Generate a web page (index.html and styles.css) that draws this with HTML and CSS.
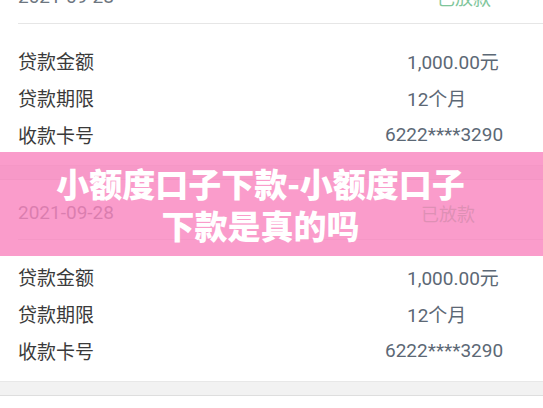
FILE: index.html
```html
<!DOCTYPE html>
<html lang="zh-CN">
<head>
<meta charset="utf-8">
<title>小额度口子下款</title>
<link rel="stylesheet" href="styles.css">
</head>
<body>
<div class="page">
  <div class="list">
    <section class="card">
      <div class="card__head">
        <span class="card__date">2021-09-28</span>
        <span class="card__status">已放款</span>
      </div>
      <div class="card__body">
        <div class="row"><span class="row__label">贷款金额</span><span class="row__val">1,000.00元</span></div>
        <div class="row"><span class="row__label">贷款期限</span><span class="row__val">12个月</span></div>
        <div class="row"><span class="row__label">收款卡号</span><span class="row__val row__val--wide">6222****3290</span></div>
      </div>
    </section>
    <div class="gap"></div>
    <section class="card">
      <div class="card__head">
        <span class="card__date">2021-09-28</span>
        <span class="card__status card__status--alt">已放款</span>
      </div>
      <div class="card__body">
        <div class="row"><span class="row__label">贷款金额</span><span class="row__val">1,000.00元</span></div>
        <div class="row"><span class="row__label">贷款期限</span><span class="row__val">12个月</span></div>
        <div class="row"><span class="row__label">收款卡号</span><span class="row__val row__val--wide">6222****3290</span></div>
      </div>
    </section>
    <div class="gap"></div>
    <section class="card card--empty"></section>
  </div>
  <div class="banner">
    <h1 class="banner__title">小额度口子下款-小额度口子下款是真的吗</h1>
  </div>
</div>
</body>
</html>
```

FILE: styles.css
```css
* { box-sizing: border-box; }
html, body {
  margin: 0;
  padding: 0;
  background: #ffffff;
  overflow: hidden;
}
body {
  width: 543px;
  height: 408px;
  font-family: Roboto, "Noto Sans CJK SC", sans-serif;
}
.page {
  position: relative;
  width: 543px;
  height: 408px;
  overflow: hidden;
}
.list {
  margin-top: -36px;
}
.card {
  background: #ffffff;
}
.card__head {
  height: 60px;
  margin-left: 18px;
  padding: 6px 60px 0 0;
  display: flex;
  align-items: center;
  justify-content: space-between;
  border-bottom: 1px solid #e6e6e6;
}
.card__date {
  font-size: 19px;
  color: #6d7680;
}
.card__status {
  font-family: "Noto Sans CJK SC", sans-serif;
  font-size: 18px;
  color: #7fc69b;
  margin-right: -8px;
}
.card__status--alt {
  margin-right: 8px;
}
.card__body {
  padding: 18px 0 12px 18px;
}
.row {
  height: 37px;
  display: grid;
  grid-template-columns: 389px 1fr;
  align-items: center;
}
.row__label {
  font-family: "Noto Sans CJK SC", sans-serif;
  font-size: 19px;
  color: #3a3a3a;
}
.row__val {
  font-family: Roboto, "Noto Sans CJK SC", sans-serif;
  font-size: 19px;
  color: #5c6875;
}
.row__val--wide {
  margin-left: -22px;
}
.gap {
  height: 15px;
  background: #f2f2f2;
  border-top: 1px solid #e8e8e8;
  border-bottom: 1px solid #dedede;
}
.card--empty {
  height: 40px;
}
.banner {
  position: absolute;
  left: 0;
  top: 152px;
  width: 543px;
  height: 104px;
  background: rgba(248, 128, 188, 0.78);
  padding: 10px 70px 10px 48px;
}
.banner__title {
  margin: 0;
  font-family: "Noto Sans CJK SC", sans-serif;
  font-weight: 900;
  font-size: 33px;
  line-height: 42px;
  color: #ffffff;
  text-align: center;
}
```
